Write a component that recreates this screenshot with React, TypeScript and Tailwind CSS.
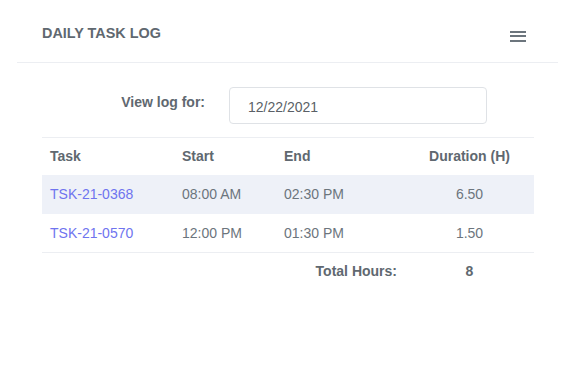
import React from "react";

const rows = [
  { task: "TSK-21-0368", start: "08:00 AM", end: "02:30 PM", dur: "6.50", shaded: true, h: "h-[39px]" },
  { task: "TSK-21-0570", start: "12:00 PM", end: "01:30 PM", dur: "1.50", shaded: false, h: "h-[38px]" },
];

export default function App() {
  return (
    <div
      className="w-[576px] h-[388px] bg-white text-[#6c757d]"
      style={{ fontFamily: '"Liberation Sans", Arial, sans-serif' }}
    >
      <div className="ml-[17px] mr-[18px]">
        <div className="flex items-center justify-between pl-[25px] pr-[32px] h-[63px] pt-[6px] border-b border-[#eceef2]">
          <div className="text-[14.4px] font-bold text-[#606870]">DAILY TASK LOG</div>
          <div className="flex flex-col gap-[2.5px] w-[16px] mt-[4px]">
            <div className="h-[2px] bg-[#6c757d]" />
            <div className="h-[2px] bg-[#6c757d]" />
            <div className="h-[2px] bg-[#6c757d]" />
          </div>
        </div>
      </div>
      <div className="ml-[42px] w-[492px]">
        <div className="flex items-center mt-[24px] h-[37px]">
          <div className="w-[163px] text-right text-[14px] font-bold text-[#606870] pb-[6px]">View log for:</div>
          <div className="ml-[24px] w-[258px] h-[37px] border border-[#dfe2e6] rounded-[4px] flex items-center pl-[18px] pt-[3px] text-[14px] text-[#5a5f66]">
            12/22/2021
          </div>
        </div>
        <div className="mt-[13px] border-t border-[#eceef2]">
          <div className="grid grid-cols-[132px_102px_129px_129px] h-[37px] items-center text-[14px] font-bold text-[#606870]">
            <div className="pl-[8px]">Task</div>
            <div className="pl-[8px]">Start</div>
            <div className="pl-[8px]">End</div>
            <div className="text-center">Duration (H)</div>
          </div>
          {rows.map((r) => (
            <div
              key={r.task}
              className={`grid grid-cols-[132px_102px_129px_129px] ${r.h} items-center text-[14px] ${r.shaded ? "bg-[#eef1f8]" : ""}`}
            >
              <div className="pl-[8px] text-[#6f74ef]">{r.task}</div>
              <div className="pl-[8px]">{r.start}</div>
              <div className="pl-[8px]">{r.end}</div>
              <div className="text-center">{r.dur}</div>
            </div>
          ))}
          <div className="grid grid-cols-[132px_102px_129px_129px] h-[38px] items-center text-[14px] font-bold text-[#606870] border-t border-[#eceef2]">
            <div />
            <div />
            <div className="text-right pr-[8px]">Total Hours:</div>
            <div className="text-center">8</div>
          </div>
        </div>
      </div>
    </div>
  );
}
